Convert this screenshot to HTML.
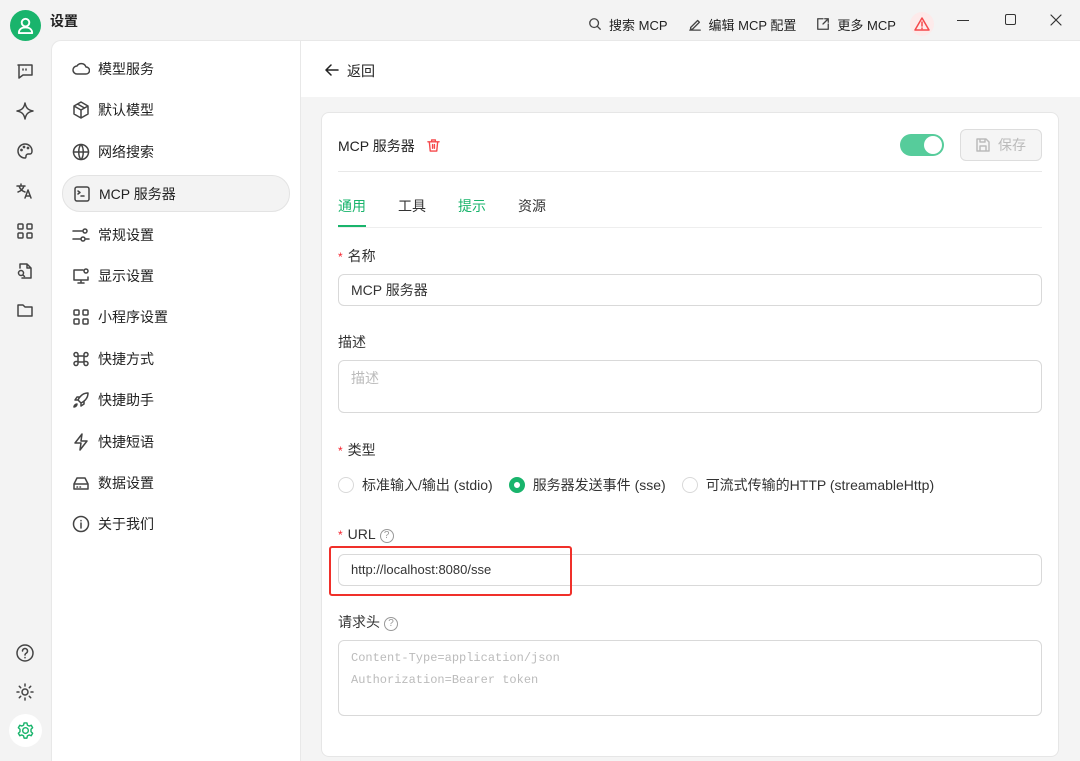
<!DOCTYPE html>
<html><head><meta charset="utf-8"><style>
*{box-sizing:border-box;margin:0;padding:0}
body{width:1080px;height:761px;overflow:hidden;background:#f3f3f3;font-family:"Liberation Sans","Noto Sans CJK SC",sans-serif;font-size:14px;color:#222;position:relative}
.a{position:absolute}
svg{fill:none;stroke:#444;stroke-width:1.5;stroke-linecap:round;stroke-linejoin:round}
.nav{position:absolute;left:62px;width:228px;height:36px;display:flex;align-items:center;padding-left:10px;font-size:14px}
.nav svg{width:18px;height:18px;margin-right:8px}
.ic{position:absolute;left:16px;width:18px;height:18px}
.lbl{position:absolute;left:338px;font-size:14px;color:#333}
.req{color:#f5222d;margin-right:5px;font-size:12px}
.inp{position:absolute;left:338px;width:704px;border:1px solid #d9d9d9;border-radius:6px;background:#fff;padding-left:12px;font-size:14px;color:#333}
.q{display:inline-block;width:14px;height:14px;border:1px solid #999;border-radius:50%;font-size:10px;line-height:12px;text-align:center;color:#999;margin-left:4px;vertical-align:1px}
.radio{display:inline-block;width:16px;height:16px;border:1px solid #d9d9d9;border-radius:50%;vertical-align:-3px;margin-right:8px;background:#fff}
</style></head><body>
<!-- title bar -->
<div class="a" style="left:10px;top:10px;width:31px;height:31px;border-radius:50%;background:#19b46c"><svg style="position:absolute;left:6px;top:6px;width:19px;height:19px;stroke:#fff;stroke-width:2" viewBox="0 0 20 20"><circle cx="10" cy="7" r="4"/><path d="M3 18c0-4 3-6 7-6s7 2 7 6z"/></svg></div>
<div class="a" style="left:50px;top:11px;font-size:14px;font-weight:bold">设置</div>
<div class="a" style="left:588px;top:12px;font-size:13px;display:flex;align-items:center;color:#222">
<svg style="width:14px;height:14px" viewBox="0 0 16 16"><circle cx="7" cy="7" r="5"/><path d="M11 11l3 3"/></svg><span style="margin:0 20px 0 7px">搜索 MCP</span>
<svg style="width:14px;height:14px" viewBox="0 0 16 16"><path d="M3 12l8-8 2 2-8 8H3zM2 15h12"/></svg><span style="margin:0 20px 0 7px">编辑 MCP 配置</span>
<svg style="width:14px;height:14px" viewBox="0 0 16 16"><path d="M8 2H2v12h12V8M10 2h4v4M14 2L8 8"/></svg><span style="margin:0 14px 0 7px">更多 MCP</span>
<div style="width:24px;height:24px;border-radius:50%;background:#fdeaea;display:flex;align-items:center;justify-content:center"><svg style="width:16px;height:16px;stroke:#f5484b" viewBox="0 0 16 16"><path d="M8 2L1 14h14zM8 6v4M8 12v.5"/></svg></div></div>
<div class="a" style="left:957px;top:20px;width:12px;height:1px;background:#333"></div>
<div class="a" style="left:1005px;top:14px;width:11px;height:11px;border:1.3px solid #333;border-radius:2px"></div>
<svg class="a" style="left:1050px;top:14px;width:12px;height:12px;stroke:#333;stroke-width:1.2" viewBox="0 0 12 12"><path d="M1 1l10 10M11 1L1 11"/></svg>
<!-- left icon column -->
<svg class="ic" style="top:62px" viewBox="0 0 18 18"><path d="M2 3h14v10H7l-4 3V3z"/><path d="M7 7v1M10 7v1"/></svg>
<svg class="ic" style="top:102px" viewBox="0 0 18 18"><path d="M9 1c1 5 3 7 8 8-5 1-7 3-8 8-1-5-3-7-8-8 5-1 7-3 8-8z"/></svg>
<svg class="ic" style="top:142px" viewBox="0 0 18 18"><path d="M9 2a7 7 0 100 14c1 0 1-1 1-2s1-2 2-2h2c1 0 2-1 2-3 0-4-3-7-7-7z"/><circle cx="5.5" cy="8" r=".6"/><circle cx="8" cy="5" r=".6"/><circle cx="12" cy="6" r=".6"/></svg>
<svg class="ic" style="top:182px" viewBox="0 0 18 18"><path d="M1 4h8M5 2v2M3 4c1 3 3 5 6 6M8 4c-1 3-3 5-6 6M9 16l3-8 3 8M10 14h4"/></svg>
<svg class="ic" style="top:222px" viewBox="0 0 18 18"><rect x="2" y="2" width="5" height="5" rx="1"/><rect x="11" y="2" width="5" height="5" rx="1"/><rect x="2" y="11" width="5" height="5" rx="1"/><rect x="11" y="11" width="5" height="5" rx="1"/></svg>
<svg class="ic" style="top:262px" viewBox="0 0 18 18"><path d="M4 6V2h7l4 4v10H6M11 2v4h4"/><circle cx="5" cy="11" r="2.5"/><path d="M7 13l1.5 1.5"/></svg>
<svg class="ic" style="top:301px" viewBox="0 0 18 18"><path d="M2 4h5l2 2h7v9H2z"/></svg>
<svg class="ic" style="top:643px;width:20px;height:20px;left:15px" viewBox="0 0 20 20"><circle cx="10" cy="10" r="8"/><path d="M7.5 8a2.5 2.5 0 114 2c-1 .6-1.5 1-1.5 2M10 14.5v.3"/></svg>
<svg class="ic" style="top:683px" viewBox="0 0 18 18"><circle cx="9" cy="9" r="3"/><path d="M9 1v2M9 15v2M1 9h2M15 9h2M3.3 3.3l1.4 1.4M13.3 13.3l1.4 1.4M3.3 14.7l1.4-1.4M13.3 4.7l1.4-1.4"/></svg>
<div class="a" style="left:9px;top:714px;width:33px;height:33px;border-radius:50%;background:#fff"><svg style="position:absolute;left:7px;top:7px;width:19px;height:19px;stroke:#19b46c" viewBox="0 0 20 20"><circle cx="10" cy="10" r="3"/><path d="M8.5 2h3l.5 2.3 1.8 1 2.2-.8 1.5 2.6-1.7 1.6v2.6l1.7 1.6-1.5 2.6-2.2-.8-1.8 1-.5 2.3h-3l-.5-2.3-1.8-1-2.2.8-1.5-2.6 1.7-1.6V8.7L2.5 7.1 4 4.5l2.2.8 1.8-1z"/></svg></div>
<!-- sidebar -->
<div class="a" style="left:51px;top:40px;width:250px;height:721px;background:#fff;border-top-left-radius:10px;border-right:1px solid #e8e8e8;border-top:1px solid #e8e8e8;border-left:1px solid #e8e8e8"></div>
<div class="nav" style="top:51px"><svg viewBox="0 0 18 18"><path d="M5 14a4 4 0 010-8 5 5 0 019 1 3.5 3.5 0 010 7z"/></svg>模型服务</div>
<div class="nav" style="top:92px"><svg viewBox="0 0 18 18"><path d="M9 1l7 4v8l-7 4-7-4V5zM2 5l7 4 7-4M9 9v8M5.5 3l7 4"/></svg>默认模型</div>
<div class="nav" style="top:134px"><svg viewBox="0 0 18 18"><circle cx="9" cy="9" r="7.5"/><path d="M1.5 9h15M9 1.5c-3 3-3 12 0 15M9 1.5c3 3 3 12 0 15"/></svg>网络搜索</div>
<div class="nav" style="top:175px;background:#f3f3f3;border:1px solid #e3e3e3;border-radius:18px;height:37px"><svg viewBox="0 0 18 18"><rect x="2" y="2" width="14" height="14" rx="2"/><path d="M5 6l2 1.5L5 9M8 11h3"/></svg>MCP 服务器</div>
<div class="nav" style="top:217px"><svg viewBox="0 0 18 18"><path d="M1 5h9M14 13h3M1 13h8"/><circle cx="13" cy="5" r="2"/><circle cx="11" cy="13" r="2"/></svg>常规设置</div>
<div class="nav" style="top:258px"><svg viewBox="0 0 18 18"><path d="M11 3H2v10h14v-3M9 13v3M6 16h6"/><circle cx="14" cy="4" r="2"/></svg>显示设置</div>
<div class="nav" style="top:299px"><svg viewBox="0 0 18 18"><rect x="2" y="2" width="5" height="5" rx="1"/><rect x="11" y="2" width="5" height="5" rx="1"/><rect x="2" y="11" width="5" height="5" rx="1"/><rect x="11" y="11" width="5" height="5" rx="1"/></svg>小程序设置</div>
<div class="nav" style="top:341px"><svg viewBox="0 0 18 18"><path d="M6 6h6v6H6zM6 6V4.5A2 2 0 104 6.5h2M12 6V4.5a2 2 0 112 2h-2M6 12v1.5A2 2 0 114 11.5h2M12 12v1.5a2 2 0 102-2h-2"/></svg>快捷方式</div>
<div class="nav" style="top:382px"><svg viewBox="0 0 18 18"><path d="M16 2c-5 0-8 3-10 7l3 3c4-2 7-5 7-10zM6 9H3l2-3h3M9 12v3l3-2v-3M5 13c-2 0-3 2-3 3 1 0 3-1 3-3z"/></svg>快捷助手</div>
<div class="nav" style="top:424px"><svg viewBox="0 0 18 18"><path d="M10 1L3 10h6l-1 7 7-9H9z"/></svg>快捷短语</div>
<div class="nav" style="top:465px"><svg viewBox="0 0 18 18"><path d="M2 10l3-6h8l3 6v5H2zM2 10h14M5 13h.5M8 13h.5"/></svg>数据设置</div>
<div class="nav" style="top:506px"><svg viewBox="0 0 18 18"><circle cx="9" cy="9" r="7.5"/><path d="M9 8v5M9 5.5v.3"/></svg>关于我们</div>
<!-- main -->
<div class="a" style="left:301px;top:40px;width:779px;height:721px;background:#f4f4f4"></div>
<div class="a" style="left:301px;top:40px;width:779px;height:57px;background:#fff;border-top:1px solid #e8e8e8"></div>
<svg class="a" style="left:325px;top:63px;width:14px;height:14px;stroke:#222" viewBox="0 0 14 14"><path d="M13 7H1M6 2L1 7l5 5"/></svg>
<div class="a" style="left:347px;top:61px;font-size:14px">返回</div>
<div class="a" style="left:321px;top:112px;width:738px;height:645px;background:#fff;border:1px solid #e6e6e6;border-radius:8px"></div>
<div class="a" style="left:338px;top:136px;font-size:14px">MCP 服务器</div>
<svg class="a" style="left:427px;top:139px;width:13px;height:13px;stroke:#f5484b" viewBox="0 0 14 14"><path d="M1 3h12M5 3V1h4v2M2.5 3l1 10h7l1-10M6 6v4M8 6v4"/></svg>
<div class="a" style="left:900px;top:134px;width:44px;height:22px;border-radius:11px;background:#56cc9b"><div style="position:absolute;right:2px;top:2px;width:18px;height:18px;border-radius:50%;background:#fff"></div></div>
<div class="a" style="left:960px;top:129px;width:82px;height:32px;border:1px solid #ddd;border-radius:6px;background:#f5f5f5;color:#bbb;font-size:14px;display:flex;align-items:center;justify-content:center"><svg style="width:14px;height:14px;stroke:#bbb;margin-right:8px" viewBox="0 0 14 14"><path d="M1 1h9l3 3v9H1zM4 1v3h5V1M4 13V8h6v5"/></svg>保存</div>
<div class="a" style="left:338px;top:171px;width:704px;height:1px;background:#e8e8e8"></div>
<div class="a" style="left:338px;top:196px;font-size:14px;color:#19b46c">通用</div>
<div class="a" style="left:338px;top:225px;width:28px;height:2px;background:#19b46c"></div>
<div class="a" style="left:338px;top:227px;width:704px;height:1px;background:#eee"></div>
<div class="a" style="left:398px;top:196px;font-size:14px;color:#333">工具</div>
<div class="a" style="left:458px;top:196px;font-size:14px;color:#19b46c">提示</div>
<div class="a" style="left:518px;top:196px;font-size:14px;color:#333">资源</div>
<div class="lbl" style="top:246px"><span class="req">*</span>名称</div>
<div class="inp" style="top:274px;height:32px;line-height:30px">MCP 服务器</div>
<div class="lbl" style="top:332px">描述</div>
<div class="inp" style="top:360px;height:53px;padding-top:7px;color:#bbb">描述</div>
<div class="lbl" style="top:440px"><span class="req">*</span>类型</div>
<div class="a" style="left:338px;top:475px;font-size:14px;color:#333;white-space:nowrap"><span class="radio"></span>标准输入/输出 (stdio)<span class="radio" style="margin-left:16px;border:5px solid #19b46c"></span>服务器发送事件 (sse)<span class="radio" style="margin-left:16px"></span>可流式传输的HTTP (streamableHttp)</div>
<div class="lbl" style="top:526px"><span class="req">*</span>URL<span class="q">?</span></div>
<div class="inp" style="top:554px;height:32px;line-height:30px;font-size:13px">http://localhost:8080/sse</div>
<div class="a" style="left:329px;top:546px;width:243px;height:50px;border:2px solid #f0302a;border-radius:3px"></div>
<div class="lbl" style="top:612px">请求头<span class="q">?</span></div>
<div class="inp" style="top:640px;height:76px;padding-top:6px;font-family:'Liberation Mono','DejaVu Sans Mono',monospace;font-size:12px;color:#bbb;line-height:22px">Content-Type=application/json<br>Authorization=Bearer token</div>
</body></html>
